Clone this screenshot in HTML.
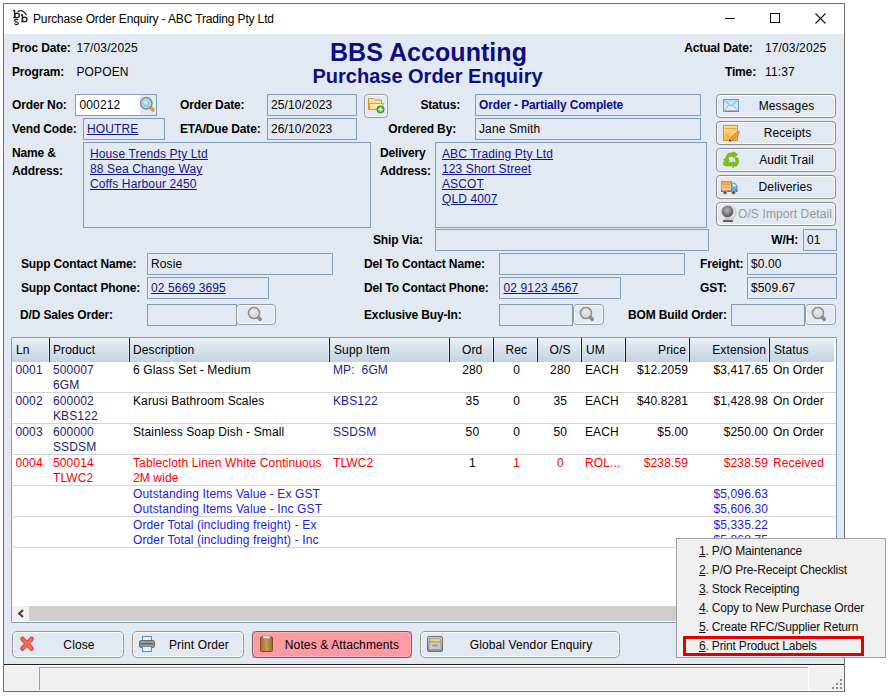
<!DOCTYPE html>
<html><head><meta charset="utf-8">
<style>
*{box-sizing:border-box}
html,body{margin:0;padding:0;width:891px;height:696px;overflow:hidden;background:#fff;font-family:"Liberation Sans",sans-serif;font-size:12px;color:#000}
.a{position:absolute;white-space:pre}
svg{position:absolute;overflow:visible}
</style></head><body>
<div class="a" style="left:0px;top:0px;width:891px;height:696px;background:#fff;"></div>
<div class="a" style="left:3px;top:3px;width:842px;height:689px;border:1px solid #6f6f6f;background:#e3e9f2;"></div>
<div class="a" style="left:4px;top:4px;width:840px;height:30px;background:#fff;"></div>
<svg style="left:8px;top:6px" width="30" height="24" viewBox="8 6 30 24">
<g stroke="#1a1a1a" fill="none" stroke-width="1.3">
<path d="M13 10.6 H14.6 V17.6 H13.2"/>
<ellipse cx="17" cy="15.4" rx="2.3" ry="2.2"/>
<path d="M21 15 H22.4 V21.6 H21.2"/>
<ellipse cx="24.6" cy="19.4" rx="2.3" ry="2.2"/>
<path d="M18.2 19.8 Q16.5 19 15.2 19.6 Q14 20.6 15.6 21.6 L17.4 22.3 Q19 23.2 17.6 24.3 Q16 25 14.2 23.6" stroke-width="1.2"/>
<path d="M17.6 11.8 Q22 8.2 26.6 15.2" stroke-width="1.1"/>
</g>
</svg>
<div class="a" style="left:33px;top:13.14px;font-size:12px;line-height:12px;letter-spacing:0.12px;color:#000;letter-spacing:-0.15px;">Purchase Order Enquiry - ABC Trading Pty Ltd</div>
<div class="a" style="left:725px;top:18px;width:10px;height:1px;background:#111;"></div>
<div class="a" style="left:770px;top:13px;width:10px;height:10px;border:1px solid #111;"></div>
<svg style="left:815px;top:13px" width="11" height="11" viewBox="0 0 11 11"><path d="M0.5 0.5 L10.5 10.5 M10.5 0.5 L0.5 10.5" stroke="#111" stroke-width="1.1"/></svg>
<div class="a" style="left:12px;top:42.14px;font-size:12px;line-height:12px;font-weight:bold;letter-spacing:-0.15px;">Proc Date:</div>
<div class="a" style="left:76.5px;top:42.14px;font-size:12px;line-height:12px;letter-spacing:0.12px;">17/03/2025</div>
<div class="a" style="left:12px;top:65.64px;font-size:12px;line-height:12px;font-weight:bold;letter-spacing:-0.15px;">Program:</div>
<div class="a" style="left:76.5px;top:65.64px;font-size:12px;line-height:12px;letter-spacing:0.12px;">POPOEN</div>
<div class="a" style="left:228.5px;width:400px;top:39.84px;font-size:25px;line-height:25px;text-align:center;font-weight:bold;letter-spacing:-0.15px;color:#0d0d80;letter-spacing:0.05px;">BBS Accounting</div>
<div class="a" style="left:227.5px;width:400px;top:66.07px;font-size:20px;line-height:20px;text-align:center;font-weight:bold;letter-spacing:-0.15px;color:#0d0d80;letter-spacing:0px;">Purchase Order Enquiry</div>
<div class="a" style="right:138.5px;top:41.84px;font-size:12px;line-height:12px;text-align:right;font-weight:bold;letter-spacing:-0.15px;">Actual Date:</div>
<div class="a" style="left:765px;top:41.84px;font-size:12px;line-height:12px;letter-spacing:0.12px;">17/03/2025</div>
<div class="a" style="right:135px;top:66.44px;font-size:12px;line-height:12px;text-align:right;font-weight:bold;letter-spacing:-0.15px;">Time:</div>
<div class="a" style="left:765px;top:66.44px;font-size:12px;line-height:12px;letter-spacing:0.12px;">11:37</div>
<div class="a" style="left:12px;top:98.84px;font-size:12px;line-height:12px;font-weight:bold;letter-spacing:-0.15px;">Order No:</div>
<div class="a" style="left:75px;top:94px;width:82px;height:22px;border:1px solid #7f9dbd;background:#fff;"></div>
<div class="a" style="left:140px;top:95px;width:16px;height:20px;background:#e3e9f2;"></div>
<svg style="left:140px;top:97px" width="17" height="17" viewBox="0 0 17 17">
<defs><radialGradient id="og" cx="0.45" cy="0.4" r="0.65"><stop offset="0" stop-color="#d6f0fd"/><stop offset="1" stop-color="#6fb6ec"/></radialGradient></defs>
<line x1="10.8" y1="10.8" x2="13" y2="13" stroke="#e29a2a" stroke-width="3.6" stroke-linecap="round"/>
<circle cx="6.3" cy="6.3" r="5.6" fill="#fff" stroke="#8a8a8a" stroke-width="1.7"/>
<circle cx="6.3" cy="6.3" r="4.2" fill="url(#og)"/>
</svg>
<div class="a" style="left:79.5px;top:99.34px;font-size:12px;line-height:12px;letter-spacing:0.12px;">000212</div>
<div class="a" style="left:180px;top:98.84px;font-size:12px;line-height:12px;font-weight:bold;letter-spacing:-0.15px;">Order Date:</div>
<div class="a" style="left:267px;top:94px;width:90px;height:22px;border:1px solid #7f9dbd;"></div>
<div class="a" style="left:271px;top:99.34px;font-size:12px;line-height:12px;letter-spacing:0.12px;">25/10/2023</div>
<div class="a" style="left:364px;top:94px;width:24px;height:24px;border:1px solid #9a9a9a;border-radius:4px;box-shadow:inset 0 0 0 1px #fff"></div>
<svg style="left:368px;top:97px" width="17" height="17" viewBox="0 0 17 17">
<defs><linearGradient id="fg1" x1="0" y1="0" x2="0" y2="1"><stop offset="0" stop-color="#fff0b8"/><stop offset="1" stop-color="#f6c860"/></linearGradient>
<linearGradient id="fg2" x1="0" y1="0" x2="0" y2="1"><stop offset="0" stop-color="#fff4c8"/><stop offset="1" stop-color="#fbd77a"/></linearGradient></defs>
<path d="M0.5 1.5 h5 l1.5 1.5 h6.5 v9.5 h-13 z" fill="url(#fg1)" stroke="#d4902e"/>
<path d="M1.5 6.5 h14 l-1.8 6 h-12.2 z" fill="url(#fg2)" stroke="#d9992e" stroke-width="0.9"/>
<circle cx="12.5" cy="12.4" r="3.7" fill="#45ad2c" stroke="#2d7d1a" stroke-width="0.6"/>
<path d="M12.5 10.2 v4.4 M10.3 12.4 h4.4" stroke="#fff" stroke-width="1.5"/>
</svg>
<div class="a" style="right:431px;top:98.84px;font-size:12px;line-height:12px;text-align:right;font-weight:bold;letter-spacing:-0.15px;">Status:</div>
<div class="a" style="left:475px;top:94px;width:226px;height:22px;border:1px solid #7f9dbd;"></div>
<div class="a" style="left:479px;top:99.34px;font-size:12px;line-height:12px;font-weight:bold;letter-spacing:-0.15px;color:#0d0d8c;">Order - Partially Complete</div>
<div class="a" style="left:12px;top:122.84px;font-size:12px;line-height:12px;font-weight:bold;letter-spacing:-0.15px;">Vend Code:</div>
<div class="a" style="left:83px;top:118px;width:82px;height:22px;border:1px solid #7f9dbd;"></div>
<div class="a" style="left:87px;top:123.44px;font-size:12px;line-height:12px;letter-spacing:0.12px;color:#13138f;text-decoration:underline;">HOUTRE</div>
<div class="a" style="left:180px;top:122.84px;font-size:12px;line-height:12px;font-weight:bold;letter-spacing:-0.15px;">ETA/Due Date:</div>
<div class="a" style="left:267px;top:118px;width:90px;height:22px;border:1px solid #7f9dbd;"></div>
<div class="a" style="left:271px;top:123.44px;font-size:12px;line-height:12px;letter-spacing:0.12px;">26/10/2023</div>
<div class="a" style="right:435px;top:122.84px;font-size:12px;line-height:12px;text-align:right;font-weight:bold;letter-spacing:-0.15px;">Ordered By:</div>
<div class="a" style="left:475px;top:118px;width:226px;height:22px;border:1px solid #7f9dbd;"></div>
<div class="a" style="left:479px;top:123.44px;font-size:12px;line-height:12px;letter-spacing:0.12px;">Jane Smith</div>
<div class="a" style="left:12px;top:147.14px;font-size:12px;line-height:12px;font-weight:bold;letter-spacing:-0.15px;">Name &amp;</div>
<div class="a" style="left:12px;top:164.64px;font-size:12px;line-height:12px;font-weight:bold;letter-spacing:-0.15px;">Address:</div>
<div class="a" style="left:83px;top:142px;width:288px;height:86px;border:1px solid #7f9dbd;"></div>
<div class="a" style="left:90px;top:147.84px;font-size:12px;line-height:12px;letter-spacing:0.12px;color:#13138f;text-decoration:underline;">House Trends Pty Ltd</div>
<div class="a" style="left:90px;top:162.84px;font-size:12px;line-height:12px;letter-spacing:0.12px;color:#13138f;text-decoration:underline;">88 Sea Change Way</div>
<div class="a" style="left:90px;top:177.84px;font-size:12px;line-height:12px;letter-spacing:0.12px;color:#13138f;text-decoration:underline;">Coffs Harbour 2450</div>
<div class="a" style="left:380px;top:147.14px;font-size:12px;line-height:12px;font-weight:bold;letter-spacing:-0.15px;">Delivery</div>
<div class="a" style="left:380px;top:164.64px;font-size:12px;line-height:12px;font-weight:bold;letter-spacing:-0.15px;">Address:</div>
<div class="a" style="left:435px;top:142px;width:272px;height:86px;border:1px solid #7f9dbd;"></div>
<div class="a" style="left:442px;top:147.84px;font-size:12px;line-height:12px;letter-spacing:0.12px;color:#13138f;text-decoration:underline;">ABC Trading Pty Ltd</div>
<div class="a" style="left:442px;top:162.84px;font-size:12px;line-height:12px;letter-spacing:0.12px;color:#13138f;text-decoration:underline;">123 Short Street</div>
<div class="a" style="left:442px;top:177.84px;font-size:12px;line-height:12px;letter-spacing:0.12px;color:#13138f;text-decoration:underline;">ASCOT</div>
<div class="a" style="left:442px;top:192.84px;font-size:12px;line-height:12px;letter-spacing:0.12px;color:#13138f;text-decoration:underline;">QLD 4007</div>
<div class="a" style="left:716px;top:94px;width:120px;height:24px;border:1px solid #8c8c8c;border-radius:4px;box-shadow:inset 0 0 0 1px #fff;background:#e3e9f2"></div>
<svg style="left:723px;top:99px" width="16" height="13" viewBox="0 0 16 13">
<defs><linearGradient id="mg" x1="0" y1="0" x2="0" y2="1"><stop offset="0" stop-color="#b9dcf6"/><stop offset="1" stop-color="#e6f3fc"/></linearGradient></defs>
<rect x="0.5" y="0.5" width="15" height="12" fill="url(#mg)" stroke="#6d9cc9"/>
<path d="M1.5 12 h14" stroke="#7a7a7a" stroke-width="1"/>
<path d="M1.5 1.5 L8 7 L14.5 1.5 M1.5 11 L5.5 6.5 M14.5 11 L10.5 6.5" stroke="#7ba6cf" stroke-width="0.9" fill="none"/>
</svg>
<div class="a" style="left:686.5px;width:200px;top:99.84px;font-size:12px;line-height:12px;text-align:center;letter-spacing:0.12px;color:#000;">Messages</div>
<div class="a" style="left:716px;top:121px;width:120px;height:24px;border:1px solid #8c8c8c;border-radius:4px;box-shadow:inset 0 0 0 1px #fff;background:#e3e9f2"></div>
<svg style="left:723px;top:125px" width="17" height="16" viewBox="0 0 17 16">
<defs><linearGradient id="rg" x1="0" y1="0" x2="0" y2="1"><stop offset="0" stop-color="#fde08a"/><stop offset="1" stop-color="#f6b545"/></linearGradient></defs>
<rect x="0.5" y="0.5" width="14" height="15" fill="url(#rg)" stroke="#d4922e"/>
<path d="M1.5 3.5 h12" stroke="#eaa73c" stroke-width="1.2"/>
<path d="M1.5 5.5 h12" stroke="#f8d07a" stroke-width="0.8"/>
<path d="M2 10 h3 v4" stroke="#d9a050" stroke-width="0.8" fill="none"/>
<path d="M6.5 14.5 L14 7 L16 9 L8.5 16 z" fill="#f7a531" stroke="#8b5a1a" stroke-width="0.6"/>
<path d="M14 7 L15.5 5.5 L17 7 L16 9 z" fill="#e58ac0"/>
<path d="M6.5 14.5 L8.5 16 L6 16.5z" fill="#333"/>
</svg>
<div class="a" style="left:687.5px;width:200px;top:126.84px;font-size:12px;line-height:12px;text-align:center;letter-spacing:0.12px;color:#000;">Receipts</div>
<div class="a" style="left:716px;top:148px;width:120px;height:24px;border:1px solid #8c8c8c;border-radius:4px;box-shadow:inset 0 0 0 1px #fff;background:#e3e9f2"></div>
<svg style="left:723px;top:152px" width="16" height="16" viewBox="0 0 16 16">
<g fill="#86c800" stroke="#4f9a00" stroke-width="0.6" stroke-linejoin="round">
<path d="M2.6 5.6 L4.6 2.2 Q5.4 1 7 1 L10.3 1 L10.3 -0.2 L14.6 2.6 L10.6 5.6 L10.6 4.2 L7.4 4.2 Q6.4 4.2 5.9 5 L5 6.6 Z"/>
<path d="M0.6 7.4 L4.6 6 L6.4 9.2 L5 8.8 L3.8 10.6 L7.6 10.6 L7.6 13.8 L3.2 13.8 Q1.2 13.8 0.6 12.4 Q0.2 11.4 0.8 10.4 L1.9 8.4 Z"/>
<path d="M12.2 5.4 L14.6 6 L15.4 8.6 Q15.8 10.4 15.2 11.6 L14 13.4 Q13.4 13.9 12 13.9 L10.2 13.9 L10.2 15.6 L7.4 12.2 L10.2 9.4 L10.2 10.8 L11.6 10.8 L12.4 10.6 L13 9.2 Z"/>
</g>
</svg>
<div class="a" style="left:686.5px;width:200px;top:153.84px;font-size:12px;line-height:12px;text-align:center;letter-spacing:0.12px;color:#000;">Audit Trail</div>
<div class="a" style="left:716px;top:175px;width:120px;height:24px;border:1px solid #8c8c8c;border-radius:4px;box-shadow:inset 0 0 0 1px #fff;background:#e3e9f2"></div>
<svg style="left:721px;top:181px" width="17" height="14" viewBox="0 0 17 14">
<defs><linearGradient id="tg" x1="0" y1="0" x2="0" y2="1"><stop offset="0" stop-color="#f3a23c"/><stop offset="1" stop-color="#fbd49a"/></linearGradient>
<linearGradient id="tc" x1="0" y1="0" x2="0" y2="1"><stop offset="0" stop-color="#9fd4fb"/><stop offset="1" stop-color="#3d9ae8"/></linearGradient></defs>
<rect x="0.5" y="0.5" width="10" height="9.5" fill="url(#tg)" stroke="#e0922a"/>
<path d="M2 3.5 h7 M2 6.5 h7" stroke="#e59a45" stroke-width="0.8"/>
<path d="M10.5 2 h3.2 l2.3 3 v5 h-5.5 z" fill="url(#tc)" stroke="#3a8ad0" stroke-width="0.8"/>
<path d="M12 3.5 h1.5 l1.3 1.8 h-2.8 z" fill="#fff"/>
<rect x="15.8" y="7.8" width="1.2" height="1.5" fill="#f39a2a"/>
<rect x="0" y="9.6" width="16.5" height="1.4" fill="#6a6a6a"/>
<circle cx="4" cy="11.5" r="2" fill="#555" stroke="#ddd" stroke-width="0.7"/><circle cx="12.5" cy="11.5" r="2" fill="#555" stroke="#ddd" stroke-width="0.7"/>
</svg>
<div class="a" style="left:685.5px;width:200px;top:180.84px;font-size:12px;line-height:12px;text-align:center;letter-spacing:0.12px;color:#000;">Deliveries</div>
<div class="a" style="left:716px;top:202px;width:120px;height:24px;border:1px solid #8c8c8c;border-radius:4px;box-shadow:inset 0 0 0 1px #fff;background:#e3e9f2"></div>
<svg style="left:721px;top:205px" width="15" height="18" viewBox="0 0 15 18">
<defs><radialGradient id="gg" cx="0.45" cy="0.4" r="0.65"><stop offset="0" stop-color="#b8b8b8"/><stop offset="0.6" stop-color="#7a7a7a"/><stop offset="1" stop-color="#4a4a4a"/></radialGradient></defs>
<path d="M8.5 0.8 A6.6 6.6 0 0 1 11.5 13.2 L3.5 13.6 L3.5 14.6 L12.5 14.6" stroke="#c8c8c8" stroke-width="1.3" fill="none"/>
<circle cx="6.5" cy="6.5" r="5.6" fill="url(#gg)" stroke="#555" stroke-width="0.5"/>
<rect x="2" y="15.2" width="10" height="1.8" fill="#555"/>
</svg>
<div class="a" style="left:685.0px;width:200px;top:207.84px;font-size:12px;line-height:12px;text-align:center;letter-spacing:0.12px;color:#9a9a9a;">O/S Import Detail</div>
<div class="a" style="left:373px;top:233.84px;font-size:12px;line-height:12px;font-weight:bold;letter-spacing:-0.15px;">Ship Via:</div>
<div class="a" style="left:435px;top:229px;width:274px;height:22px;border:1px solid #7f9dbd;"></div>
<div class="a" style="right:93px;top:233.84px;font-size:12px;line-height:12px;text-align:right;font-weight:bold;letter-spacing:-0.15px;">W/H:</div>
<div class="a" style="left:803px;top:229px;width:34px;height:22px;border:1px solid #7f9dbd;"></div>
<div class="a" style="left:807px;top:233.84px;font-size:12px;line-height:12px;letter-spacing:0.12px;">01</div>
<div class="a" style="left:21px;top:257.84px;font-size:12px;line-height:12px;font-weight:bold;letter-spacing:-0.15px;">Supp Contact Name:</div>
<div class="a" style="left:147px;top:253px;width:186px;height:22px;border:1px solid #7f9dbd;"></div>
<div class="a" style="left:151px;top:258.34px;font-size:12px;line-height:12px;letter-spacing:0.12px;">Rosie</div>
<div class="a" style="left:364px;top:257.84px;font-size:12px;line-height:12px;font-weight:bold;letter-spacing:-0.15px;">Del To Contact Name:</div>
<div class="a" style="left:499px;top:253px;width:186px;height:22px;border:1px solid #7f9dbd;"></div>
<div class="a" style="left:700px;top:257.84px;font-size:12px;line-height:12px;font-weight:bold;letter-spacing:-0.15px;">Freight:</div>
<div class="a" style="left:747px;top:253px;width:90px;height:22px;border:1px solid #7f9dbd;"></div>
<div class="a" style="left:751px;top:258.34px;font-size:12px;line-height:12px;letter-spacing:0.12px;">$0.00</div>
<div class="a" style="left:21px;top:281.84px;font-size:12px;line-height:12px;font-weight:bold;letter-spacing:-0.15px;">Supp Contact Phone:</div>
<div class="a" style="left:147px;top:277px;width:122px;height:22px;border:1px solid #7f9dbd;"></div>
<div class="a" style="left:151px;top:282.34px;font-size:12px;line-height:12px;letter-spacing:0.12px;color:#13138f;text-decoration:underline;">02 5669 3695</div>
<div class="a" style="left:364px;top:281.84px;font-size:12px;line-height:12px;font-weight:bold;letter-spacing:-0.15px;">Del To Contact Phone:</div>
<div class="a" style="left:499px;top:277px;width:122px;height:22px;border:1px solid #7f9dbd;"></div>
<div class="a" style="left:503.5px;top:282.34px;font-size:12px;line-height:12px;letter-spacing:0.12px;color:#13138f;text-decoration:underline;">02 9123 4567</div>
<div class="a" style="left:700px;top:281.84px;font-size:12px;line-height:12px;font-weight:bold;letter-spacing:-0.15px;">GST:</div>
<div class="a" style="left:747px;top:277px;width:90px;height:22px;border:1px solid #7f9dbd;"></div>
<div class="a" style="left:751px;top:282.34px;font-size:12px;line-height:12px;letter-spacing:0.12px;">$509.67</div>
<div class="a" style="left:20px;top:308.84px;font-size:12px;line-height:12px;font-weight:bold;letter-spacing:-0.15px;">D/D Sales Order:</div>
<div class="a" style="left:147px;top:304px;width:90px;height:22px;border:1px solid #7f9dbd;"></div>
<div class="a" style="left:236px;top:304px;width:40px;height:21px;border:1px solid #9a9a9a;border-radius:4px;box-shadow:inset 0 0 0 1px #fff"></div>
<svg style="left:246.9px;top:306.2px" width="17" height="17" viewBox="0 0 17 17">
<defs><radialGradient id="sg236" cx="0.45" cy="0.4" r="0.6"><stop offset="0" stop-color="#f2f2f2"/><stop offset="1" stop-color="#c4c4c4"/></radialGradient></defs>
<line x1="10.5" y1="10.5" x2="13.2" y2="13.2" stroke="#8a8a8a" stroke-width="3.6" stroke-linecap="round"/>
<circle cx="7" cy="7" r="5.4" fill="url(#sg236)" stroke="#8d8d8d" stroke-width="1.8"/>
<circle cx="7" cy="7" r="4.1" fill="none" stroke="#fff" stroke-width="0.7" opacity="0.8"/>
</svg>
<div class="a" style="left:364px;top:308.84px;font-size:12px;line-height:12px;font-weight:bold;letter-spacing:-0.15px;">Exclusive Buy-In:</div>
<div class="a" style="left:499px;top:304px;width:74px;height:22px;border:1px solid #7f9dbd;"></div>
<div class="a" style="left:573px;top:304px;width:31px;height:21px;border:1px solid #9a9a9a;border-radius:4px;box-shadow:inset 0 0 0 1px #fff"></div>
<svg style="left:579.4px;top:306.2px" width="17" height="17" viewBox="0 0 17 17">
<defs><radialGradient id="sg573" cx="0.45" cy="0.4" r="0.6"><stop offset="0" stop-color="#f2f2f2"/><stop offset="1" stop-color="#c4c4c4"/></radialGradient></defs>
<line x1="10.5" y1="10.5" x2="13.2" y2="13.2" stroke="#8a8a8a" stroke-width="3.6" stroke-linecap="round"/>
<circle cx="7" cy="7" r="5.4" fill="url(#sg573)" stroke="#8d8d8d" stroke-width="1.8"/>
<circle cx="7" cy="7" r="4.1" fill="none" stroke="#fff" stroke-width="0.7" opacity="0.8"/>
</svg>
<div class="a" style="left:628px;top:308.84px;font-size:12px;line-height:12px;font-weight:bold;letter-spacing:-0.15px;">BOM Build Order:</div>
<div class="a" style="left:731px;top:304px;width:74px;height:22px;border:1px solid #7f9dbd;"></div>
<div class="a" style="left:805px;top:304px;width:31px;height:21px;border:1px solid #9a9a9a;border-radius:4px;box-shadow:inset 0 0 0 1px #fff"></div>
<svg style="left:811.4px;top:306.2px" width="17" height="17" viewBox="0 0 17 17">
<defs><radialGradient id="sg805" cx="0.45" cy="0.4" r="0.6"><stop offset="0" stop-color="#f2f2f2"/><stop offset="1" stop-color="#c4c4c4"/></radialGradient></defs>
<line x1="10.5" y1="10.5" x2="13.2" y2="13.2" stroke="#8a8a8a" stroke-width="3.6" stroke-linecap="round"/>
<circle cx="7" cy="7" r="5.4" fill="url(#sg805)" stroke="#8d8d8d" stroke-width="1.8"/>
<circle cx="7" cy="7" r="4.1" fill="none" stroke="#fff" stroke-width="0.7" opacity="0.8"/>
</svg>
<div class="a" style="left:11px;top:337px;width:826px;height:286px;border:1px solid #819dbd;background:#fff;"></div>
<div class="a" style="left:12px;top:338px;width:822px;height:24px;background:linear-gradient(#eaeff6,#c4d2e3)"></div>
<div class="a" style="left:49px;top:338px;width:1px;height:24px;background:#222;"></div>
<div class="a" style="left:48px;top:338px;width:1px;height:24px;background:rgba(255,255,255,0.45);"></div>
<div class="a" style="left:129px;top:338px;width:1px;height:24px;background:#222;"></div>
<div class="a" style="left:128px;top:338px;width:1px;height:24px;background:rgba(255,255,255,0.45);"></div>
<div class="a" style="left:329px;top:338px;width:1px;height:24px;background:#222;"></div>
<div class="a" style="left:328px;top:338px;width:1px;height:24px;background:rgba(255,255,255,0.45);"></div>
<div class="a" style="left:449px;top:338px;width:1px;height:24px;background:#222;"></div>
<div class="a" style="left:448px;top:338px;width:1px;height:24px;background:rgba(255,255,255,0.45);"></div>
<div class="a" style="left:493px;top:338px;width:1px;height:24px;background:#222;"></div>
<div class="a" style="left:492px;top:338px;width:1px;height:24px;background:rgba(255,255,255,0.45);"></div>
<div class="a" style="left:537px;top:338px;width:1px;height:24px;background:#222;"></div>
<div class="a" style="left:536px;top:338px;width:1px;height:24px;background:rgba(255,255,255,0.45);"></div>
<div class="a" style="left:581px;top:338px;width:1px;height:24px;background:#222;"></div>
<div class="a" style="left:580px;top:338px;width:1px;height:24px;background:rgba(255,255,255,0.45);"></div>
<div class="a" style="left:625px;top:338px;width:1px;height:24px;background:#222;"></div>
<div class="a" style="left:624px;top:338px;width:1px;height:24px;background:rgba(255,255,255,0.45);"></div>
<div class="a" style="left:689px;top:338px;width:1px;height:24px;background:#222;"></div>
<div class="a" style="left:688px;top:338px;width:1px;height:24px;background:rgba(255,255,255,0.45);"></div>
<div class="a" style="left:769px;top:338px;width:1px;height:24px;background:#222;"></div>
<div class="a" style="left:768px;top:338px;width:1px;height:24px;background:rgba(255,255,255,0.45);"></div>
<div class="a" style="left:16px;top:343.84px;font-size:12px;line-height:12px;letter-spacing:0.12px;">Ln</div>
<div class="a" style="left:53px;top:343.84px;font-size:12px;line-height:12px;letter-spacing:0.12px;">Product</div>
<div class="a" style="left:133px;top:343.84px;font-size:12px;line-height:12px;letter-spacing:0.12px;">Description</div>
<div class="a" style="left:334px;top:343.84px;font-size:12px;line-height:12px;letter-spacing:0.12px;">Supp Item</div>
<div class="a" style="left:442.2px;width:60px;top:343.84px;font-size:12px;line-height:12px;text-align:center;letter-spacing:0.12px;">Ord</div>
<div class="a" style="left:486.4px;width:60px;top:343.84px;font-size:12px;line-height:12px;text-align:center;letter-spacing:0.12px;">Rec</div>
<div class="a" style="left:530.0px;width:60px;top:343.84px;font-size:12px;line-height:12px;text-align:center;letter-spacing:0.12px;">O/S</div>
<div class="a" style="left:586px;top:343.84px;font-size:12px;line-height:12px;letter-spacing:0.12px;">UM</div>
<div class="a" style="right:205px;top:343.84px;font-size:12px;line-height:12px;text-align:right;letter-spacing:0.12px;">Price</div>
<div class="a" style="right:125px;top:343.84px;font-size:12px;line-height:12px;text-align:right;letter-spacing:0.12px;">Extension</div>
<div class="a" style="left:774px;top:343.84px;font-size:12px;line-height:12px;letter-spacing:0.12px;">Status</div>
<div class="a" style="left:13px;top:392px;width:823px;height:1px;background:#d4d4d4;"></div>
<div class="a" style="left:13px;top:423px;width:823px;height:1px;background:#d4d4d4;"></div>
<div class="a" style="left:13px;top:454px;width:823px;height:1px;background:#d4d4d4;"></div>
<div class="a" style="left:13px;top:485px;width:823px;height:1px;background:#d4d4d4;"></div>
<div class="a" style="left:13px;top:516px;width:823px;height:1px;background:#d4d4d4;"></div>
<div class="a" style="left:13px;top:547px;width:823px;height:1px;background:#d4d4d4;"></div>
<div class="a" style="left:15.5px;top:363.84px;font-size:12px;line-height:12px;letter-spacing:0.12px;color:#1a1a80;">0001</div>
<div class="a" style="left:53px;top:363.84px;font-size:12px;line-height:12px;letter-spacing:0.12px;color:#1a1a80;">500007</div>
<div class="a" style="left:53px;top:378.84px;font-size:12px;line-height:12px;letter-spacing:0.12px;color:#1a1a80;">6GM</div>
<div class="a" style="left:133px;top:363.84px;font-size:12px;line-height:12px;letter-spacing:0.12px;">6 Glass Set - Medium</div>
<div class="a" style="left:333px;top:363.84px;font-size:12px;line-height:12px;letter-spacing:0.12px;color:#1a1aa0;">MP:  6GM</div>
<div class="a" style="left:442.4px;width:60px;top:363.84px;font-size:12px;line-height:12px;text-align:center;letter-spacing:0.12px;">280</div>
<div class="a" style="left:486.6px;width:60px;top:363.84px;font-size:12px;line-height:12px;text-align:center;letter-spacing:0.12px;">0</div>
<div class="a" style="left:530.3px;width:60px;top:363.84px;font-size:12px;line-height:12px;text-align:center;letter-spacing:0.12px;">280</div>
<div class="a" style="left:585px;top:363.84px;font-size:12px;line-height:12px;letter-spacing:0.12px;">EACH</div>
<div class="a" style="right:203px;top:363.84px;font-size:12px;line-height:12px;text-align:right;letter-spacing:0.12px;">$12.2059</div>
<div class="a" style="right:123px;top:363.84px;font-size:12px;line-height:12px;text-align:right;letter-spacing:0.12px;">$3,417.65</div>
<div class="a" style="left:773px;top:363.84px;font-size:12px;line-height:12px;letter-spacing:0.12px;">On Order</div>
<div class="a" style="left:15.5px;top:394.84px;font-size:12px;line-height:12px;letter-spacing:0.12px;color:#1a1a80;">0002</div>
<div class="a" style="left:53px;top:394.84px;font-size:12px;line-height:12px;letter-spacing:0.12px;color:#1a1a80;">600002</div>
<div class="a" style="left:53px;top:409.84px;font-size:12px;line-height:12px;letter-spacing:0.12px;color:#1a1a80;">KBS122</div>
<div class="a" style="left:133px;top:394.84px;font-size:12px;line-height:12px;letter-spacing:0.12px;">Karusi Bathroom Scales</div>
<div class="a" style="left:333px;top:394.84px;font-size:12px;line-height:12px;letter-spacing:0.12px;color:#1a1aa0;">KBS122</div>
<div class="a" style="left:442.4px;width:60px;top:394.84px;font-size:12px;line-height:12px;text-align:center;letter-spacing:0.12px;">35</div>
<div class="a" style="left:486.6px;width:60px;top:394.84px;font-size:12px;line-height:12px;text-align:center;letter-spacing:0.12px;">0</div>
<div class="a" style="left:530.3px;width:60px;top:394.84px;font-size:12px;line-height:12px;text-align:center;letter-spacing:0.12px;">35</div>
<div class="a" style="left:585px;top:394.84px;font-size:12px;line-height:12px;letter-spacing:0.12px;">EACH</div>
<div class="a" style="right:203px;top:394.84px;font-size:12px;line-height:12px;text-align:right;letter-spacing:0.12px;">$40.8281</div>
<div class="a" style="right:123px;top:394.84px;font-size:12px;line-height:12px;text-align:right;letter-spacing:0.12px;">$1,428.98</div>
<div class="a" style="left:773px;top:394.84px;font-size:12px;line-height:12px;letter-spacing:0.12px;">On Order</div>
<div class="a" style="left:15.5px;top:425.84px;font-size:12px;line-height:12px;letter-spacing:0.12px;color:#1a1a80;">0003</div>
<div class="a" style="left:53px;top:425.84px;font-size:12px;line-height:12px;letter-spacing:0.12px;color:#1a1a80;">600000</div>
<div class="a" style="left:53px;top:440.84px;font-size:12px;line-height:12px;letter-spacing:0.12px;color:#1a1a80;">SSDSM</div>
<div class="a" style="left:133px;top:425.84px;font-size:12px;line-height:12px;letter-spacing:0.12px;">Stainless Soap Dish - Small</div>
<div class="a" style="left:333px;top:425.84px;font-size:12px;line-height:12px;letter-spacing:0.12px;color:#1a1aa0;">SSDSM</div>
<div class="a" style="left:442.4px;width:60px;top:425.84px;font-size:12px;line-height:12px;text-align:center;letter-spacing:0.12px;">50</div>
<div class="a" style="left:486.6px;width:60px;top:425.84px;font-size:12px;line-height:12px;text-align:center;letter-spacing:0.12px;">0</div>
<div class="a" style="left:530.3px;width:60px;top:425.84px;font-size:12px;line-height:12px;text-align:center;letter-spacing:0.12px;">50</div>
<div class="a" style="left:585px;top:425.84px;font-size:12px;line-height:12px;letter-spacing:0.12px;">EACH</div>
<div class="a" style="right:203px;top:425.84px;font-size:12px;line-height:12px;text-align:right;letter-spacing:0.12px;">$5.00</div>
<div class="a" style="right:123px;top:425.84px;font-size:12px;line-height:12px;text-align:right;letter-spacing:0.12px;">$250.00</div>
<div class="a" style="left:773px;top:425.84px;font-size:12px;line-height:12px;letter-spacing:0.12px;">On Order</div>
<div class="a" style="left:15.5px;top:456.84px;font-size:12px;line-height:12px;letter-spacing:0.12px;color:#ff0000;">0004</div>
<div class="a" style="left:53px;top:456.84px;font-size:12px;line-height:12px;letter-spacing:0.12px;color:#ff0000;">500014</div>
<div class="a" style="left:53px;top:471.84px;font-size:12px;line-height:12px;letter-spacing:0.12px;color:#ff0000;">TLWC2</div>
<div class="a" style="left:133px;top:456.84px;font-size:12px;line-height:12px;letter-spacing:0.12px;color:#ff0000;">Tablecloth Linen White Continuous</div>
<div class="a" style="left:133px;top:471.84px;font-size:12px;line-height:12px;letter-spacing:0.12px;color:#ff0000;">2M wide</div>
<div class="a" style="left:333px;top:456.84px;font-size:12px;line-height:12px;letter-spacing:0.12px;color:#ff0000;">TLWC2</div>
<div class="a" style="left:442.4px;width:60px;top:456.84px;font-size:12px;line-height:12px;text-align:center;letter-spacing:0.12px;">1</div>
<div class="a" style="left:486.6px;width:60px;top:456.84px;font-size:12px;line-height:12px;text-align:center;letter-spacing:0.12px;color:#ff0000;">1</div>
<div class="a" style="left:530.3px;width:60px;top:456.84px;font-size:12px;line-height:12px;text-align:center;letter-spacing:0.12px;color:#ff0000;">0</div>
<div class="a" style="left:585px;top:456.84px;font-size:12px;line-height:12px;letter-spacing:0.12px;color:#ff0000;">ROL...</div>
<div class="a" style="right:203px;top:456.84px;font-size:12px;line-height:12px;text-align:right;letter-spacing:0.12px;color:#ff0000;">$238.59</div>
<div class="a" style="right:123px;top:456.84px;font-size:12px;line-height:12px;text-align:right;letter-spacing:0.12px;color:#ff0000;">$238.59</div>
<div class="a" style="left:773px;top:456.84px;font-size:12px;line-height:12px;letter-spacing:0.12px;color:#ff0000;">Received</div>
<div class="a" style="left:133px;top:487.84px;font-size:12px;line-height:12px;letter-spacing:0.12px;color:#2020e0;">Outstanding Items Value - Ex GST</div>
<div class="a" style="left:133px;top:502.84px;font-size:12px;line-height:12px;letter-spacing:0.12px;color:#2020e0;">Outstanding Items Value - Inc GST</div>
<div class="a" style="right:123px;top:487.84px;font-size:12px;line-height:12px;text-align:right;letter-spacing:0.12px;color:#2020e0;">$5,096.63</div>
<div class="a" style="right:123px;top:502.84px;font-size:12px;line-height:12px;text-align:right;letter-spacing:0.12px;color:#2020e0;">$5,606.30</div>
<div class="a" style="left:133px;top:518.84px;font-size:12px;line-height:12px;letter-spacing:0.12px;color:#2020e0;">Order Total (including freight) - Ex</div>
<div class="a" style="left:133px;top:533.84px;font-size:12px;line-height:12px;letter-spacing:0.12px;color:#2020e0;">Order Total (including freight) - Inc</div>
<div class="a" style="right:123px;top:518.84px;font-size:12px;line-height:12px;text-align:right;letter-spacing:0.12px;color:#2020e0;">$5,335.22</div>
<div class="a" style="right:123px;top:533.84px;font-size:12px;line-height:12px;text-align:right;letter-spacing:0.12px;color:#2020e0;">$5,868.75</div>
<div class="a" style="left:12px;top:606px;width:824px;height:15px;background:#f0f0f0;"></div>
<div class="a" style="left:29px;top:606px;width:807px;height:15px;background:#cdcdcd;"></div>
<svg style="left:17px;top:609px" width="8" height="9" viewBox="0 0 8 9"><path d="M6 1 L2.2 4.5 L6 8" stroke="#4a4a4a" stroke-width="2.3" fill="none"/></svg>
<div class="a" style="left:12px;top:631px;width:112px;height:27px;border:1px solid #9a9a9a;border-radius:5px;box-shadow:inset 0 0 0 1px #fff;background:#e3e9f2"></div>
<svg style="left:19px;top:636px" width="16" height="16" viewBox="0 0 16 16">
<path d="M3.5 3 L12.5 12.5 M12.5 3 L3.5 12.5" stroke="#c8402e" stroke-width="4.6" stroke-linecap="round"/>
<path d="M3.5 3 L12.5 12.5 M12.5 3 L3.5 12.5" stroke="#f26a55" stroke-width="3" stroke-linecap="round"/>
</svg>
<div class="a" style="left:-21.0px;width:200px;top:638.84px;font-size:12px;line-height:12px;text-align:center;letter-spacing:0.12px;">Close</div>
<div class="a" style="left:132px;top:631px;width:112px;height:27px;border:1px solid #9a9a9a;border-radius:5px;box-shadow:inset 0 0 0 1px #fff;background:#e3e9f2"></div>
<svg style="left:139px;top:636px" width="16" height="16" viewBox="0 0 16 16">
<rect x="3.5" y="0.5" width="9" height="5" fill="#e4f0fb" stroke="#5b8fc0"/>
<rect x="0.5" y="4.5" width="15" height="7" rx="1.5" fill="#9a9a9a" stroke="#6a6a6a"/>
<rect x="1.5" y="7" width="13" height="1.5" fill="#666"/>
<rect x="3.5" y="10.5" width="9" height="5" fill="#e4f0fb" stroke="#5b8fc0"/>
</svg>
<div class="a" style="left:99.0px;width:200px;top:638.84px;font-size:12px;line-height:12px;text-align:center;letter-spacing:0.12px;">Print Order</div>
<div class="a" style="left:252px;top:631px;width:160px;height:27px;background:#ff9aa3"></div>
<div class="a" style="left:252px;top:631px;width:160px;height:27px;border:1px solid #6f6266;border-radius:5px;box-shadow:inset 0 0 0 1px #ffb3b9;background:#ff9aa3"></div>
<svg style="left:260px;top:636px" width="13" height="16" viewBox="0 0 13 16">
<defs><linearGradient id="cg" x1="0" y1="0" x2="1" y2="0"><stop offset="0" stop-color="#9a6a30"/><stop offset="0.5" stop-color="#c9995a"/><stop offset="1" stop-color="#9a6a30"/></linearGradient></defs>
<rect x="0.5" y="1" width="12" height="14.5" rx="1" fill="url(#cg)" stroke="#7a5228"/>
<rect x="3" y="0" width="7" height="2.5" rx="0.5" fill="#e8e8e8" stroke="#8a8a8a" stroke-width="0.6"/>
</svg>
<div class="a" style="left:242.0px;width:200px;top:638.84px;font-size:12px;line-height:12px;text-align:center;letter-spacing:0.12px;">Notes &amp; Attachments</div>
<div class="a" style="left:420px;top:631px;width:200px;height:27px;border:1px solid #9a9a9a;border-radius:5px;box-shadow:inset 0 0 0 1px #fff;background:#e3e9f2"></div>
<svg style="left:427px;top:636px" width="16" height="16" viewBox="0 0 16 16">
<defs><linearGradient id="vg" x1="0" y1="0" x2="0" y2="1"><stop offset="0" stop-color="#d0d0d0"/><stop offset="1" stop-color="#8e8e8e"/></linearGradient></defs>
<rect x="0.5" y="0.5" width="15" height="15" rx="1.5" fill="url(#vg)" stroke="#707070"/>
<rect x="2.5" y="2.5" width="11" height="3.5" fill="#f1d36a" stroke="#8a8a8a" stroke-width="0.6"/>
<rect x="2" y="6" width="12" height="7.5" fill="#c8c8c8" stroke="#888" stroke-width="0.6"/>
<rect x="5.5" y="8.5" width="5" height="2" fill="#999"/>
</svg>
<div class="a" style="left:431.0px;width:200px;top:638.84px;font-size:12px;line-height:12px;text-align:center;letter-spacing:0.12px;">Global Vendor Enquiry</div>
<div class="a" style="left:4px;top:664px;width:840px;height:1px;background:#1e1e1e;"></div>
<div class="a" style="left:4px;top:665px;width:840px;height:1px;background:#fafafa;"></div>
<div class="a" style="left:4px;top:666px;width:840px;height:25px;background:#f0f0f0;"></div>
<div class="a" style="left:39px;top:667px;width:769px;height:1px;background:#a0a0a0;"></div>
<div class="a" style="left:39px;top:667px;width:1px;height:23px;background:#a0a0a0;"></div>
<div class="a" style="left:40px;top:690px;width:804px;height:1px;background:#fff;"></div>
<div class="a" style="left:808px;top:667px;width:1px;height:23px;background:#fff;"></div>
<div class="a" style="left:840px;top:679px;width:2px;height:2px;background:#8f8f8f;"></div>
<div class="a" style="left:836px;top:683px;width:2px;height:2px;background:#8f8f8f;"></div>
<div class="a" style="left:840px;top:683px;width:2px;height:2px;background:#8f8f8f;"></div>
<div class="a" style="left:832px;top:687px;width:2px;height:2px;background:#8f8f8f;"></div>
<div class="a" style="left:836px;top:687px;width:2px;height:2px;background:#8f8f8f;"></div>
<div class="a" style="left:840px;top:687px;width:2px;height:2px;background:#8f8f8f;"></div>
<div class="a" style="left:676px;top:538px;width:210px;height:120px;background:#f0f0f0;border:1px solid #a0a0a0"></div>
<div class="a" style="left:699px;top:544.84px;font-size:12px;line-height:12px;letter-spacing:0.12px;color:#111;letter-spacing:-0.17px;"><span style="text-decoration:underline">1</span>. P/O Maintenance</div>
<div class="a" style="left:699px;top:563.84px;font-size:12px;line-height:12px;letter-spacing:0.12px;color:#111;letter-spacing:-0.17px;"><span style="text-decoration:underline">2</span>. P/O Pre-Receipt Checklist</div>
<div class="a" style="left:699px;top:582.84px;font-size:12px;line-height:12px;letter-spacing:0.12px;color:#111;letter-spacing:-0.17px;"><span style="text-decoration:underline">3</span>. Stock Receipting</div>
<div class="a" style="left:699px;top:601.84px;font-size:12px;line-height:12px;letter-spacing:0.12px;color:#111;letter-spacing:-0.17px;"><span style="text-decoration:underline">4</span>. Copy to New Purchase Order</div>
<div class="a" style="left:699px;top:620.84px;font-size:12px;line-height:12px;letter-spacing:0.12px;color:#111;letter-spacing:-0.17px;"><span style="text-decoration:underline">5</span>. Create RFC/Supplier Return</div>
<div class="a" style="left:699px;top:639.84px;font-size:12px;line-height:12px;letter-spacing:0.12px;color:#111;letter-spacing:-0.17px;"><span style="text-decoration:underline">6</span>. Print Product Labels</div>
<div class="a" style="left:683px;top:636px;width:181px;height:20px;border:3px solid #e00000"></div>
</body></html>
